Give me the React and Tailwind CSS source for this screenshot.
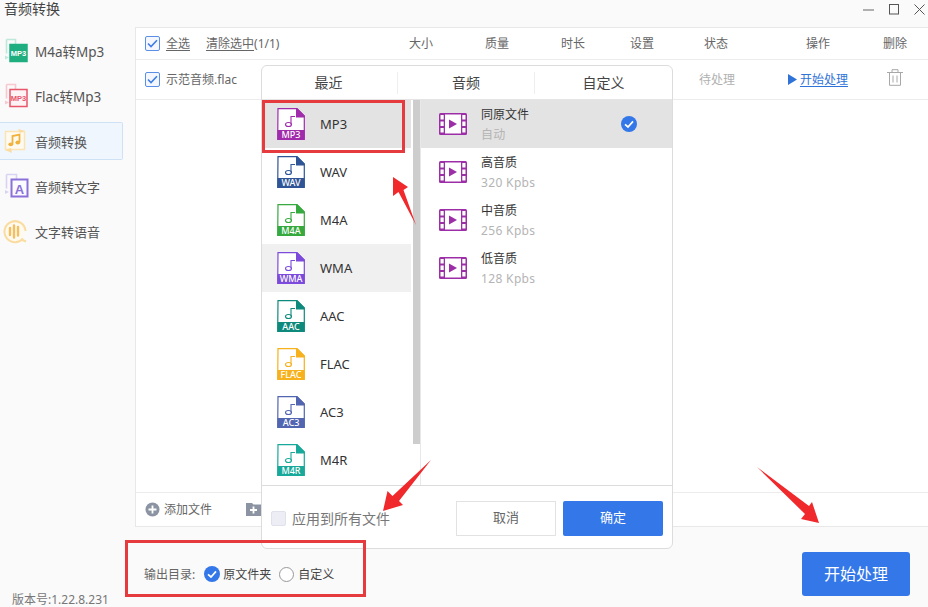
import React from "react";

const FONT = "font-['Noto_Sans','Noto_Sans_CJK_SC',sans-serif]";

function Check({ size = 14 }) {
  return (
    <span className="flex shrink-0 items-center justify-center rounded-[2px] border border-[#5b8fe6] bg-[#f4f8fe]" style={{ width: size + 1, height: size + 1 }}>
      <svg width="11" height="9" viewBox="0 0 11 9" fill="none"><path d="M1 4.5 4 7.5 10 1.2" stroke="#3d7ce8" strokeWidth="1.6" /></svg>
    </span>
  );
}

function RoundCheck({ size = 16 }) {
  return (
    <svg width={size} height={size} viewBox="0 0 16 16" className="shrink-0">
      <circle cx="8" cy="8" r="8" fill="#3377e8" />
      <path d="M4 8.300 7 11l5-5.600" fill="none" stroke="#fff" strokeWidth="1.700" />
    </svg>
  );
}

function SideIcon({ kind }) {
  if (kind === "m4a" || kind === "flac") {
    const c = kind === "m4a" ? "#1fae7f" : "#e8566a";
    const f = kind === "m4a" ? "#bfe8da" : "#f8c8cf";
    return (
      <svg width="26" height="26" viewBox="0 0 26 26">
        <path d="M4.500 1.500h9v5M4.500 1.500v14" fill="none" stroke={f} strokeWidth="1.600" />
        <path d="M3 17.500l4 2-4 2z" fill={f} />
        <rect x="8" y="6.500" width="17" height="17" fill={kind === "m4a" ? c : "#fdf2f4"} stroke={c} strokeWidth="1.500" />
        <text x="16.500" y="18" textAnchor="middle" fontSize="7.500" fontWeight="700" fontFamily="Liberation Sans" fill={kind === "m4a" ? "#fff" : c}>MP3</text>
      </svg>
    );
  }
  if (kind === "audio") {
    return (
      <svg width="26" height="28" viewBox="0 0 26 28">
        <rect x="3.500" y="4.500" width="19" height="18" fill="#fffaf0" stroke="#fbe3b4" strokeWidth="1.500" />
        <path d="M16 2l7 2-5 2zM10 26l-7-3 6-2z" fill="#fbdca0" />
        <path d="M10.500 17V9l7-1.500V15" fill="none" stroke="#f0b23c" strokeWidth="1.800" />
        <ellipse cx="8.800" cy="17.300" rx="2.400" ry="1.900" fill="#f0b23c" />
        <ellipse cx="15.800" cy="15.500" rx="2.400" ry="1.900" fill="#f0b23c" />
      </svg>
    );
  }
  if (kind === "text") {
    return (
      <svg width="28" height="26" viewBox="0 0 28 26">
        <path d="M4.500 1.500h10v5M4.500 1.500v14" fill="none" stroke="#d9d2f3" strokeWidth="1.600" />
        <path d="M3 17l4 2-4 2z" fill="#d9d2f3" />
        <rect x="9.500" y="6.500" width="16" height="17" fill="#fbfaff" stroke="#8a70d8" strokeWidth="2" />
        <text x="17.500" y="20.500" textAnchor="middle" fontSize="13" fontWeight="700" fontFamily="Liberation Sans" fill="#8a70d8">A</text>
      </svg>
    );
  }
  return (
    <svg width="26" height="26" viewBox="0 0 26 26">
      <path d="M21 20.500A10.500 10.500 0 1 1 23.500 13" fill="#fffaf0" stroke="#fbdca0" strokeWidth="2" />
      <path d="M19 21.500l5 2" stroke="#fbdca0" strokeWidth="2" />
      <path d="M8 10v7M12 7.500v12M16 9v8.500" stroke="#f3bf60" strokeWidth="2.400" strokeLinecap="round" />
    </svg>
  );
}

function FileIcon({ label, color }) {
  return (
    <svg width="28" height="32" viewBox="0 0 28 32" className="shrink-0">
      <path d="M1 .7H20L27.300 8V31.300H.7z" fill="#fff" stroke={color} strokeWidth="1.200" />
      <path d="M19 .5h1.500L27.500 7.500V9.500H19z" fill={color} />
      <path d="M.5 22H27.500V30.500a1 1 0 0 1-1 1H1.500a1 1 0 0 1-1-1z" fill={color} />
      <path d="M14 16.500V8.500h4" fill="none" stroke={color} strokeWidth="1.100" />
      <ellipse cx="11.500" cy="16.500" rx="3" ry="2" fill="none" stroke={color} strokeWidth="1.100" />
      <text x="14" y="29.600" textAnchor="middle" fontSize="9" fontFamily="Noto Sans" fontWeight="500" fill="#fff">{label}</text>
    </svg>
  );
}

function FilmIcon() {
  const c = "#9c2fa8";
  return (
    <svg width="28" height="22" viewBox="0 0 28 22" className="shrink-0">
      <rect x="0" y="0" width="28" height="22" rx="1.500" fill={c} />
      <rect x="6" y="1.500" width="16" height="19" fill="#fff" />
      {[2, 8.500, 15].map((y) => (
        <React.Fragment key={y}>
          <rect x="1.500" y={y} width="3.200" height="4.500" fill="#fff" />
          <rect x="23.300" y={y} width="3.200" height="4.500" fill="#fff" />
        </React.Fragment>
      ))}
      <path d="M10 6.500 18 11l-8 4.500z" fill={c} />
    </svg>
  );
}

const sideItems = [
  { kind: "m4a", label: "M4a转Mp3", size: "text-[13.5px]" },
  { kind: "flac", label: "Flac转Mp3", size: "text-[13.5px]" },
  { kind: "audio", label: "音频转换", size: "text-[13px]", active: true },
  { kind: "text", label: "音频转文字", size: "text-[13px]" },
  { kind: "tts", label: "文字转语音", size: "text-[13px]" },
];

const formats = [
  { label: "MP3", color: "#a02bab", active: true },
  { label: "WAV", color: "#2f5597" },
  { label: "M4A", color: "#36a93f" },
  { label: "WMA", color: "#7c4bdc", hover: true },
  { label: "AAC", color: "#0e8a7d" },
  { label: "FLAC", color: "#f6b11c" },
  { label: "AC3", color: "#5165b0" },
  { label: "M4R", color: "#18a99a" },
];

const qualities = [
  { name: "同原文件", sub: "自动", active: true },
  { name: "高音质", sub: "320 Kpbs" },
  { name: "中音质", sub: "256 Kpbs" },
  { name: "低音质", sub: "128 Kpbs" },
];

const headers = [
  ["大小", "w-[76px]"],
  ["质量", "w-[76px]"],
  ["时长", "w-[76px]"],
  ["设置", "w-[62px]"],
  ["状态", "w-[86px]"],
  ["操作", "w-[118px]"],
  ["删除", "w-[36px]"],
];

function Dialog() {
  return (
    <div className="absolute left-[261px] top-[65px] z-10 flex h-[484px] w-[412px] flex-col rounded-[6px] border border-[#dcdcdc] bg-white">
      <div className="flex h-[34px] shrink-0 items-center border-b border-[#e4e4e4] text-[14px] text-[#444]">
        <div className="flex h-[22px] w-[136px] items-center justify-center border-r border-[#eeeeee] pr-[2px]">最近</div>
        <div className="flex h-[22px] w-[137px] items-center justify-center border-r border-[#eeeeee]">音频</div>
        <div className="flex h-[22px] flex-1 items-center justify-center">自定义</div>
      </div>
      <div className="flex min-h-0 flex-1 overflow-hidden">
        <div className="relative w-[159px] shrink-0 border-r border-[#e8e8e8]">
          <div className="absolute right-0 top-0 h-[344px] w-[7px] bg-[#cdcdcd]" />
          <div className="w-[149px]">
            {formats.map((f) => (
              <div key={f.label} className={`flex h-[48px] items-center gap-[15px] pl-[15px] text-[13px] text-[#333] ${f.active ? "bg-[#e3e3e3]" : f.hover ? "bg-[#f0f0f0]" : ""}`}>
                <FileIcon label={f.label} color={f.color} />
                <span className="pt-[1px]">{f.label}</span>
              </div>
            ))}
          </div>
        </div>
        <div className="flex-1">
          {qualities.map((q) => (
            <div key={q.name} className={`flex h-[48px] items-center pl-[18px] pr-[35px] ${q.active ? "bg-[#e3e3e3]" : ""}`}>
              <FilmIcon />
              <div className="ml-[14px] flex-1 pt-[1px] leading-[20px]">
                <div className="text-[12px] text-[#333]">{q.name}</div>
                <div className="text-[12px] tracking-[0.35px] text-[#b4b4b4]">{q.sub}</div>
              </div>
              {q.active && <RoundCheck />}
            </div>
          ))}
        </div>
      </div>
      <div className="flex h-[63px] shrink-0 items-center border-t border-[#dcdcdc] pl-[9px] pr-[9px] pt-[2px]">
        <span className="h-[15px] w-[15px] rounded-[2px] border border-[#dfe1ec] bg-[#ecedf5]" />
        <span className="ml-[6px] text-[14px] text-[#777]">应用到所有文件</span>
        <button className="ml-auto h-[35px] w-[100px] border border-[#e2e2e2] bg-white text-[13px] text-[#666]">取消</button>
        <button className="ml-[7px] h-[35px] w-[100px] rounded-[2px] bg-[#3377e8] text-[13px] text-white">确定</button>
      </div>
    </div>
  );
}

export default function App() {
  return (
    <div className={`relative flex h-[607px] w-[928px] flex-col overflow-hidden bg-[#fafafa] text-[#666] ${FONT}`}>
      <div className="flex h-[27px] shrink-0 items-center justify-between pb-[9px] pl-[4px] pr-[3px]">
        <span className="text-[14px] leading-[18px] text-[#444]">音频转换</span>
        <div className="flex items-center gap-[15px]">
          <svg width="11" height="11" viewBox="0 0 11 11"><path d="M0 6h11" stroke="#666" /></svg>
          <svg width="10" height="11" viewBox="0 0 10 11"><rect x=".5" y=".5" width="9" height="9.500" fill="none" stroke="#555" /></svg>
          <svg width="11" height="11" viewBox="0 0 11 11"><path d="M.5.5l10 10M10.500.5l-10 10" stroke="#555" /></svg>
        </div>
      </div>

      <div className="flex min-h-0 flex-1">
        <div className="flex w-[135px] shrink-0 flex-col gap-[7px] pt-[5px]">
          {sideItems.map((s) => (
            <div key={s.label} className={`flex h-[38px] w-[123px] items-center rounded-r-[2px] border-y border-r ${s.active ? "border-[#cfe2f5] bg-[#eff6fd]" : "border-transparent"}`}>
              <span className="flex w-[35px] shrink-0 pl-[2px]"><SideIcon kind={s.kind} /></span>
              <span className={`pt-[3px] whitespace-nowrap text-[#555] ${s.size}`}>{s.label}</span>
            </div>
          ))}
        </div>

        <div className="flex min-w-0 flex-1 flex-col border-y border-l border-[#e8e8e8] bg-white">
          <div className="flex h-[32px] shrink-0 items-center border-b border-[#ececec] text-[12px] whitespace-nowrap">
            <div className="flex w-[247px] shrink-0 items-center pl-[9px]">
              <Check />
              <span className="ml-[6px] underline underline-offset-2">全选</span>
              <span className="ml-[16px] underline underline-offset-2">清除选中</span>
              <span>(1/1)</span>
            </div>
            <div className="flex text-center">
              {headers.map(([t, w]) => <span key={t} className={w}>{t}</span>)}
            </div>
          </div>
          <div className="flex h-[40px] shrink-0 items-center border-b border-[#ececec] pl-[9px] text-[12px] whitespace-nowrap">
            <Check />
            <span className="ml-[6px]">示范音频.flac</span>
            <span className="ml-[462px] text-[#b0b0b0]">待处理</span>
            <svg className="ml-[53px]" width="9" height="11" viewBox="0 0 9 11"><path d="M0 0l9 5.500L0 11z" fill="#2f73d8" /></svg>
            <span className="ml-[3px] text-[#2f73d8] underline underline-offset-2">开始处理</span>
            <svg className="mb-[4px] ml-[39px]" width="16" height="17" viewBox="0 0 16 17" fill="none" stroke="#a8a8a8">
              <path d="M0 3.500h16M5 3V.7h6V3M2.500 4v12.300h11V4M6 6.500v7M10 6.500v7" />
            </svg>
          </div>
          <div className="flex-1" />
          <div className="flex h-[34px] shrink-0 items-center border-t border-[#ececec] pl-[9px] text-[12px]">
            <svg width="15" height="15" viewBox="0 0 15 15"><circle cx="7.500" cy="7.500" r="7" fill="#8c94a3" /><path d="M7.500 3.500v8M3.500 7.500h8" stroke="#fff" strokeWidth="1.800" /></svg>
            <span className="ml-[4px]">添加文件</span>
            <svg className="ml-[34px]" width="15" height="13" viewBox="0 0 15 13"><path d="M0 0h6l1.500 1.500H15V13H0z" fill="#8c94a3" /><path d="M7.500 3.500v7M4 7h7" stroke="#fff" strokeWidth="1.800" /></svg>
          </div>
        </div>
      </div>

      <div className="flex h-[80px] shrink-0 items-center pb-[11px] pr-[18px] pt-[25px] text-[12px]">
        <div className="mb-[-12px] w-[144px] shrink-0 self-end whitespace-nowrap pl-[12px] leading-[16px] text-[#777]">版本号:1.22.8.231</div>
        <span className="pt-[1px]">输出目录:</span>
        <span className="ml-[9px] flex items-center gap-[3px]"><RoundCheck size={16} /><span className="pt-[1px] text-[#444]">原文件夹</span></span>
        <span className="ml-[8px] flex items-center gap-[4px]"><span className="h-[15px] w-[15px] rounded-full border border-[#999] bg-white" /><span className="pt-[1px] text-[#444]">自定义</span></span>
        <button className="ml-auto h-[44px] w-[108px] rounded-[3px] bg-[#3377e8] text-[16px] text-white">开始处理</button>
      </div>

      <Dialog />

      <div className="pointer-events-none absolute left-[262px] top-[100px] z-20 h-[53px] w-[143px] border-[3px] border-[#e53b3f]" />
      <div className="pointer-events-none absolute left-[125px] top-[540px] z-20 h-[57px] w-[241px] border-[3px] border-[#e53b3f]" />
      <svg className="pointer-events-none absolute left-0 top-0 z-30" width="928" height="607" viewBox="0 0 928 607">
        <path d="M393 177 408 187 403.500 190 416 225 398.500 192 393 196z" fill="#f0292c" />
        <path d="M431 460 399 501 403 505 383 511 387.500 491 392.500 496z" fill="#f0292c" />
        <path d="M757 467 809 506 812 502 819 523 801 519 805 514z" fill="#f0292c" />
      </svg>
    </div>
  );
}
